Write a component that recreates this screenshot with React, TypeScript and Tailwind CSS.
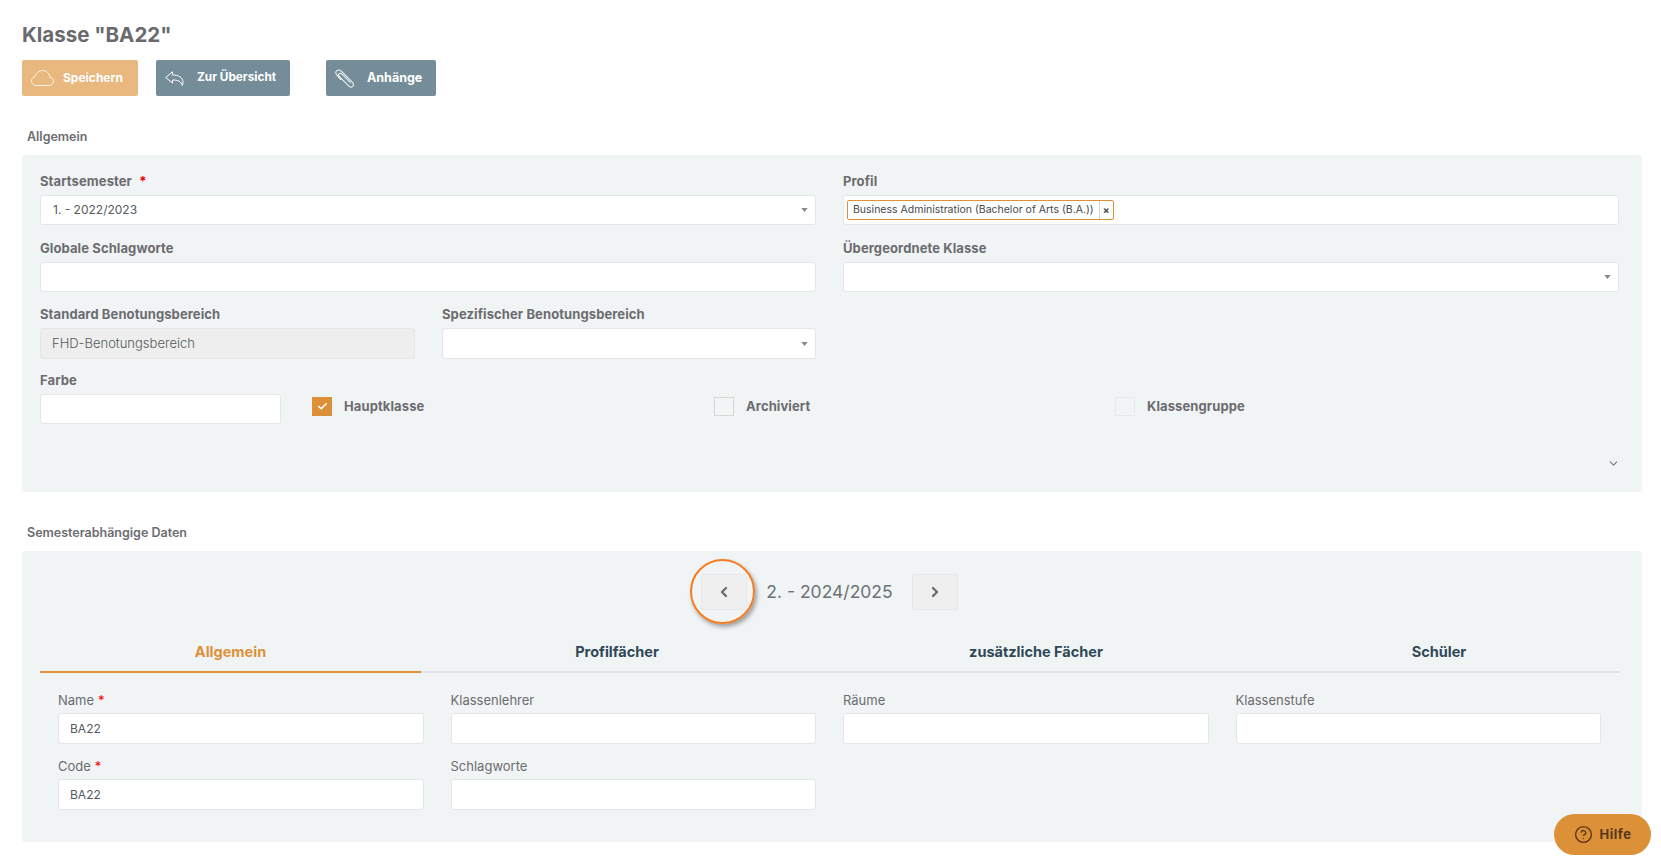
import React from 'react';
import { ChevronDown, ChevronLeft, ChevronRight, Check, CircleHelp } from 'lucide-react';

const Caret = () => (
  <svg viewBox="0 0 8 5" className="absolute right-[7px] top-1/2 -mt-[2px] w-[7px] h-[4px]">
    <path d="M0 0h8L4 5z" fill="#888888" />
  </svg>
);

const Req = () => <span className="text-[#f00000] ml-1">*</span>;

const BoldLabel = ({ children }: { children: React.ReactNode }) => (
  <div className="h-[15px] mb-[6px] text-[13px] leading-[15px] font-bold tracking-[0.1px] text-[#6c6c70]">{children}</div>
);

const Box = ({ children, caret, className = '' }: { children?: React.ReactNode; caret?: boolean; className?: string }) => (
  <div className={`relative bg-white border border-[#e4e6e8] rounded-[3px] pl-3 flex items-center text-[12px] text-[#555b60] ${className}`}>
    {children}
    {caret && <Caret />}
  </div>
);

const SmallField = ({ label, req, value }: { label: string; req?: boolean; value?: string }) => (
  <div>
    <div className="h-[15px] mb-[5px] text-[13px] leading-[15px] text-[#6c6c70]">{label}{req && <Req />}</div>
    <div className="h-[31px] bg-white border border-[#e4e6e8] rounded-[3px] pl-[11px] flex items-center text-[12px] text-[#555b60]">{value}</div>
  </div>
);

const CheckItem = ({ label, checked, faint, className = '' }: { label: string; checked?: boolean; faint?: boolean; className?: string }) => (
  <div className={`flex items-center mb-[8px] ${className}`}>
    {checked ? (
      <div className="w-5 h-[19px] bg-[#dc9138] flex items-center justify-center">
        <Check size={11} color="white" strokeWidth={3.5} />
      </div>
    ) : (
      <div className={`w-5 h-[19px] border ${faint ? 'bg-[#f1f3f4] border-[#e6e8ea]' : 'bg-[#f3f4f5] border-[#d6d6d2]'}`} />
    )}
    <span className="ml-3 text-[13px] font-bold tracking-[0.1px] text-[#6c6c70]">{label}</span>
  </div>
);

const CloudIcon = () => (
  <svg viewBox="0 0 23 16" className="w-[23px] h-4" fill="none" stroke="white" strokeOpacity={0.8} strokeWidth={1}>
    <path d="M5 15.5C2.5 15.5.5 13.5.5 11 .5 8.8 2 7 4 6.6 5 3 8 .5 11.5.5c4 0 7 3 7.3 6.5 2.2.6 3.7 2.3 3.7 4.3 0 2.4-2 4.2-4.5 4.2Z" />
  </svg>
);

const ReplyIcon = () => (
  <svg viewBox="0 0 19 15" className="w-[19px] h-[15px]" fill="none" stroke="white" strokeWidth={1}>
    <path d="M.7 6.5 7.5.8V4c5.5 0 10.5 2 10.5 7.5 0 1-.3 2-.7 3C16.5 10.500 12.500 8.800 7.500 9v3Z" />
  </svg>
);

const ClipIcon = () => (
  <svg viewBox="0 0 20 18" className="w-[21px] h-[19px]" fill="none" stroke="white" strokeOpacity={0.9} strokeWidth={1} strokeLinecap="round">
    <path d="M5.500 10 1.800 5.800C.2 4 .5 2.600 1.800 1.500 3.100.5 4.500.6 6 2l10.500 10.500c1.400 1.500 1.300 2.900.3 3.900-1 1-2.500 1-3.800-.3L4 7c-.8-.9-.8-1.800-.1-2.500.7-.7 1.700-.6 2.500.2l8.100 8.100" />
  </svg>
);

export default function App() {
  return (
    <div className="relative h-[859px] overflow-hidden bg-white font-['Inter','Liberation_Sans',sans-serif] pl-[22px] pr-[19px] pt-[24px]">
      <h1 className="h-[22px] text-[20.5px] leading-[22px] font-bold text-[#6a6a6e]">Klasse "BA22"</h1>

      <div className="flex mt-[14px]">
        <button className="w-[116px] h-9 rounded-[2px] bg-[#e8b87e] text-white text-[12px] font-bold flex items-center pl-[9px]">
          <CloudIcon />
          <span className="ml-[9px]">Speichern</span>
        </button>
        <button className="w-[134px] h-9 ml-[18px] rounded-[2px] bg-[#748d99] text-white text-[11.8px] font-bold flex items-center pl-[9px]">
          <ReplyIcon />
          <span className="ml-[13px]">Zur Übersicht</span>
        </button>
        <button className="w-[110px] h-9 ml-9 rounded-[2px] bg-[#748d99] text-white text-[12.5px] font-bold flex items-center pl-[9px]">
          <ClipIcon />
          <span className="ml-[11px]">Anhänge</span>
        </button>
      </div>

      <div className="mt-[33px] ml-[5px] h-4 text-[12.5px] leading-4 font-semibold text-[#6c6c70]">Allgemein</div>

      <section className="mt-[10px] h-[337px] bg-[#f0f4f5] rounded-[3px] pl-[18px] pr-[23px] pt-[19px] relative">
        <div className="grid grid-cols-2 gap-x-[27px]">
          <div>
            <BoldLabel>Startsemester <Req /></BoldLabel>
            <Box caret className="h-[30px]">1. - 2022/2023</Box>
          </div>
          <div>
            <BoldLabel>Profil</BoldLabel>
            <Box className="h-[30px] pl-[3px]">
              <span className="flex items-center h-[20px] border border-[#dc9138] rounded-[2px] bg-white text-[10.5px] text-[#45494d]">
                <span className="pl-[5px] pr-[5px]">Business Administration (Bachelor of Arts (B.A.))</span>
                <span className="w-[14px] h-full border-l border-[#d5d5d5] flex items-center justify-center text-[10px] font-bold">×</span>
              </span>
            </Box>
          </div>
        </div>

        <div className="grid grid-cols-2 gap-x-[27px] mt-[16px]">
          <div>
            <BoldLabel>Globale Schlagworte</BoldLabel>
            <Box className="h-[30px]" />
          </div>
          <div>
            <BoldLabel>Übergeordnete Klasse</BoldLabel>
            <Box caret className="h-[30px]" />
          </div>
        </div>

        <div className="grid grid-cols-[375px_374px_1fr] gap-x-[27px] mt-[15px]">
          <div>
            <BoldLabel>Standard Benotungsbereich</BoldLabel>
            <Box className="!bg-[#eeeeee] h-[31px] text-[13px] font-light pl-[11px]">FHD-Benotungsbereich</Box>
          </div>
          <div>
            <BoldLabel>Spezifischer Benotungsbereich</BoldLabel>
            <Box caret className="h-[31px]" />
          </div>
        </div>

        <div className="flex items-end mt-[14px]">
          <div className="w-[241px]">
            <BoldLabel>Farbe</BoldLabel>
            <Box className="h-[30px]" />
          </div>
          <CheckItem label="Hauptklasse" checked className="ml-[31px] w-[402px]" />
          <CheckItem label="Archiviert" className="w-[401px]" />
          <CheckItem label="Klassengruppe" faint />
        </div>

        <ChevronDown size={13} color="#777777" className="absolute right-[22px] top-[302px]" />
      </section>

      <div className="mt-[33px] ml-[5px] h-4 text-[12.5px] leading-4 font-semibold text-[#6c6c70]">Semesterabhängige Daten</div>

      <section className="mt-[10px] h-[291px] bg-[#f0f4f5] rounded-[3px] pl-[18px] pr-[23px] pt-[23px]">
        <div className="flex items-center justify-center h-9">
          <div className="relative w-[46px] h-9 bg-[#efefef] border border-[#e6e7e8] rounded-[2px] flex items-center justify-center">
            <ChevronLeft size={16} color="#666c72" strokeWidth={3.5} />
            <div className="absolute left-[-12px] top-[-16px] w-[65px] h-[65px] rounded-full border-2 border-[#f57c1f] shadow-[2px_3px_4px_rgba(0,0,0,0.35)]" />
          </div>
          <span className="mx-[19px] text-[17.5px] text-[#6e7276]">2. - 2024/2025</span>
          <div className="w-[46px] h-9 bg-[#efefef] border border-[#e6e7e8] rounded-[2px] flex items-center justify-center">
            <ChevronRight size={16} color="#666c72" strokeWidth={3.5} />
          </div>
        </div>

        <div className="grid grid-cols-[381px_392px_446px_360px] mt-[22px] border-b-2 border-[#dfe2e4] h-[41px] text-[14.5px] font-bold text-center text-[#2f4858]">
          <div className="h-[41px] border-b-2 border-[#dc9138] text-[#dc9138] leading-[39px]">Allgemein</div>
          <div className="leading-[39px]">Profilfächer</div>
          <div className="leading-[39px]">zusätzliche Fächer</div>
          <div className="leading-[39px]">Schüler</div>
        </div>

        <div className="grid grid-cols-4 gap-x-[27px] gap-y-[15px] pl-[18px] pr-[18px] mt-[20px]">
          <SmallField label="Name" req value="BA22" />
          <SmallField label="Klassenlehrer" />
          <SmallField label="Räume" />
          <SmallField label="Klassenstufe" />
          <SmallField label="Code" req value="BA22" />
          <SmallField label="Schlagworte" />
        </div>
      </section>

      <div className="absolute left-[1554px] top-[814px] w-[97px] h-[41px] rounded-full bg-[#dc9138] flex items-center justify-center gap-[7px] text-[13px] font-bold tracking-[0.5px] text-[#57361a]">
        <CircleHelp size={19} strokeWidth={1.75} />
        Hilfe
      </div>
    </div>
  );
}
